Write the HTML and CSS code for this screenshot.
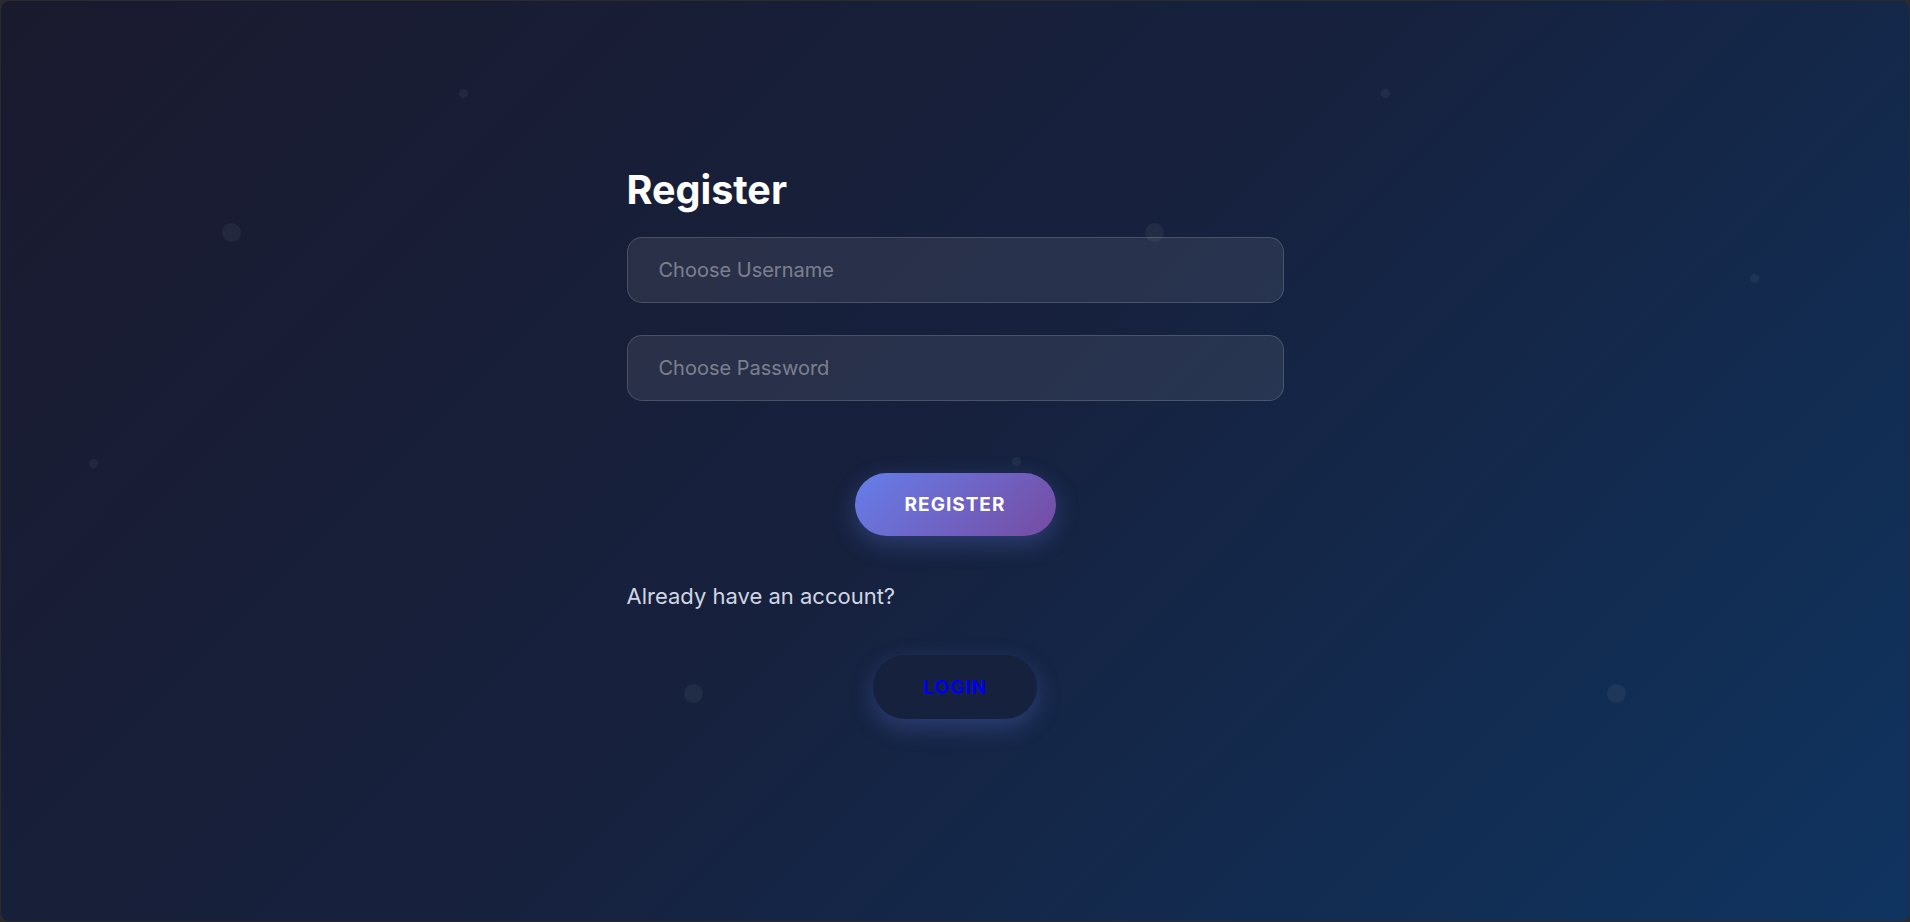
FILE: index.html
```html
<!DOCTYPE html>
<html lang="en">
<head>
    <meta charset="UTF-8">
    <meta name="viewport" content="width=device-width, initial-scale=1.0">
    <title>Register</title>
    <link rel="stylesheet" href="styles.css">
</head>
<body>
    <div class="app">
        <div class="particles">
            <span class="dot small" style="left: 462px; top: 92px;"></span>
            <span class="dot small" style="left: 1384px; top: 92px;"></span>
            <span class="dot" style="left: 230px; top: 231px;"></span>
            <span class="dot" style="left: 1153px; top: 231px;"></span>
            <span class="dot small" style="left: 1753px; top: 277px;"></span>
            <span class="dot small" style="left: 92px; top: 462px;"></span>
            <span class="dot small" style="left: 1015px; top: 460px;"></span>
            <span class="dot" style="left: 692px; top: 692px;"></span>
            <span class="dot" style="left: 1615px; top: 692px;"></span>
        </div>

        <main class="auth">
            <h2>Register</h2>
            <form class="auth-form">
                <input type="text" placeholder="Choose Username">
                <input type="password" placeholder="Choose Password">
                <button type="button" class="btn-primary">Register</button>
            </form>
            <p class="switch">Already have an account?</p>
            <button type="button" class="btn-secondary"><a href="#">Login</a></button>
        </main>
    </div>
</body>
</html>
```

FILE: styles.css
```css
* {
    box-sizing: border-box;
}
body {
    margin: 0;
    background: #2b2b2d;
    font-family: Inter, "Noto Sans", sans-serif;
}
.app {
    position: relative;
    height: calc(100vh - 2px);
    margin: 1px;
    border-radius: 8px;
    overflow: hidden;
    background: linear-gradient(135deg, #1a1a2e 0%, #16213e 50%, #0f3460 100%);
}
.particles {
    position: absolute;
    inset: 0;
    pointer-events: none;
}
.dot {
    position: absolute;
    width: 19px;
    height: 19px;
    margin: -9px 0 0 -9px;
    border-radius: 50%;
    background: rgba(255, 255, 255, 0.05);
}
.dot.small {
    width: 9px;
    height: 9px;
    margin: -4px 0 0 -4px;
}
.auth {
    position: relative;
    width: 657px;
    margin: 0 auto;
    padding-top: 165px;
    display: flex;
    flex-direction: column;
}
.auth h2 {
    margin: 0 0 23px;
    color: #ffffff;
    font-size: 39.5px;
    font-weight: 700;
    line-height: 48px;
}
.auth-form {
    display: flex;
    flex-direction: column;
    gap: 32px;
}
.auth-form input {
    height: 66px;
    padding: 0 31px;
    border: 1px solid rgba(255, 255, 255, 0.16);
    border-radius: 15px;
    background: rgba(255, 255, 255, 0.08);
    color: #fff;
    font-family: inherit;
    font-size: 20px;
    outline: none;
}
.auth-form input::placeholder {
    color: rgba(255, 255, 255, 0.4);
}
.btn-primary,
.btn-secondary {
    align-self: center;
    height: 63px;
    border: none;
    border-radius: 32px;
    font-family: inherit;
    font-size: 19px;
    font-weight: 700;
    letter-spacing: 1px;
    text-transform: uppercase;
    cursor: pointer;
}
.btn-primary {
    width: 201px;
    margin-top: 40px;
    background: linear-gradient(135deg, #667eea 0%, #764ba2 100%);
    color: #fff;
    box-shadow: 0 8px 25px rgba(102, 126, 234, 0.3);
}
.switch {
    margin: 47px 0 46px;
    color: #d0d6e2;
    font-size: 22px;
    line-height: 26px;
}
.btn-secondary {
    width: 164px;
    height: 64px;
    background: #16213e;
    box-shadow: 0 8px 25px rgba(102, 126, 234, 0.3);
}
.btn-secondary a {
    color: #0000ee;
    text-decoration: none;
}
```
